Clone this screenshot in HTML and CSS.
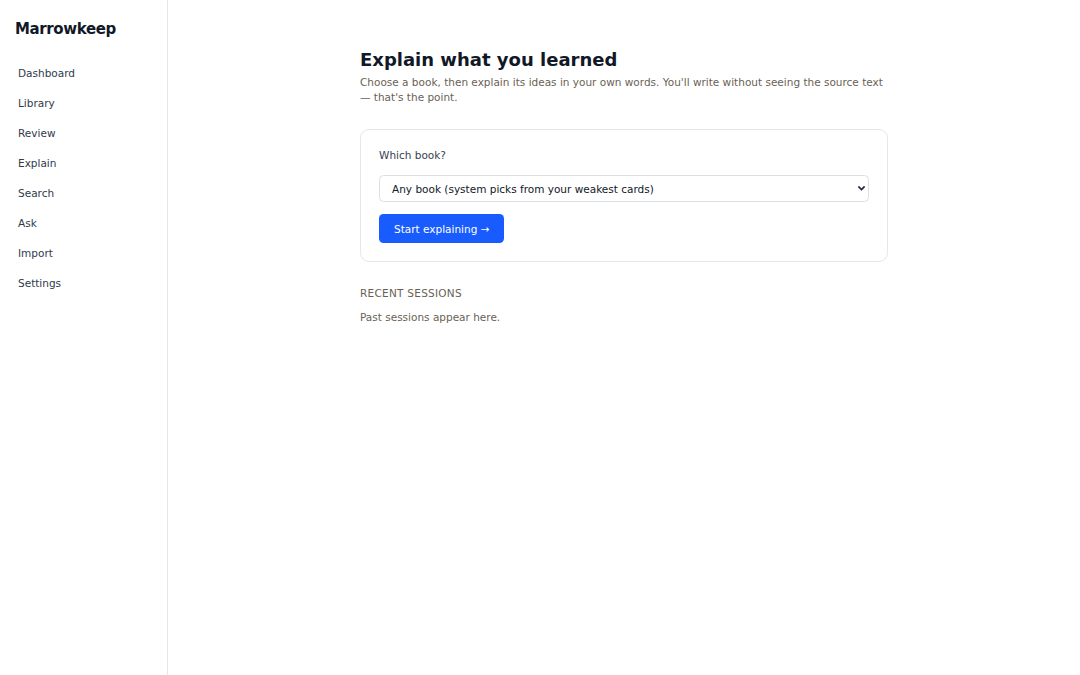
FILE: index.html
```html
<!DOCTYPE html>
<html lang="en">
<head>
<meta charset="utf-8">
<title>Explain — Marrowkeep</title>
<link rel="stylesheet" href="styles.css">
</head>
<body>
<div class="app">
  <aside class="sidebar">
    <div class="logo">Marrowkeep</div>
    <nav class="nav">
      <a class="nav-item" href="#">Dashboard</a>
      <a class="nav-item" href="#">Library</a>
      <a class="nav-item" href="#">Review</a>
      <a class="nav-item" href="#">Explain</a>
      <a class="nav-item" href="#">Search</a>
      <a class="nav-item" href="#">Ask</a>
      <a class="nav-item" href="#">Import</a>
      <a class="nav-item" href="#">Settings</a>
    </nav>
  </aside>
  <main class="main">
    <div class="column">
      <h1 class="title">Explain what you learned</h1>
      <p class="subtitle">Choose a book, then explain its ideas in your own words. You'll write without seeing the source text — that's the point.</p>
      <section class="card">
        <label class="label" for="book">Which book?</label>
        <div class="select-wrap">
          <select class="select" id="book">
            <option>Any book (system picks from your weakest cards)</option>
          </select>
          <svg class="chevron" width="7" height="5" viewBox="0 0 7 5" aria-hidden="true">
            <path d="M1 1 L3.5 3.5 L6 1" fill="none" stroke="#1f2937" stroke-width="1.7" stroke-linecap="square" stroke-linejoin="miter"/>
          </svg>
        </div>
        <button class="btn" type="button">Start explaining →</button>
      </section>
      <h2 class="section-title">Recent sessions</h2>
      <p class="muted">Past sessions appear here.</p>
    </div>
  </main>
</div>
</body>
</html>
```
FILE: styles.css
```css
* { box-sizing: border-box; }
html, body { margin: 0; padding: 0; height: 100%; }
body {
  font-family: "DejaVu Sans", "Noto Sans", sans-serif;
  font-size: 10.5px;
  line-height: 15px;
  color: #111827;
  background: #ffffff;
}
.app {
  display: flex;
  min-height: 100%;
}
.sidebar {
  width: 168px;
  flex: 0 0 168px;
  border-right: 1px solid #e5e7eb;
  padding: 19px 12px;
  background: #ffffff;
}
.logo {
  font-size: 15px;
  line-height: 21px;
  font-weight: 700;
  letter-spacing: -0.375px;
  color: #111827;
  padding: 0 3px;
  margin-bottom: 18.5px;
}
.nav {
  display: flex;
  flex-direction: column;
}
.nav-item {
  display: block;
  padding: 7.5px 6px;
  color: #2f3a4c;
  text-decoration: none;
  border-radius: 4.5px;
}
.main {
  flex: 1;
  padding: 48px 24px;
  display: flex;
  justify-content: center;
}
.column {
  width: 528px;
}
.title {
  margin: 0;
  font-size: 18px;
  line-height: 24px;
  font-weight: 700;
  color: #111827;
}
.subtitle {
  margin: 3px 0 0;
  color: #6b5f55;
}
.card {
  margin-top: 24px;
  border: 1px solid #e5e7eb;
  border-radius: 9px;
  padding: 18px;
  display: flex;
  flex-direction: column;
  align-items: flex-start;
}
.label {
  color: #374151;
  margin-bottom: 12px;
}
.select-wrap {
  position: relative;
  width: 100%;
  margin-bottom: 12px;
}
.select {
  display: block;
  width: 100%;
  height: 27px;
  border: 1px solid #dcdfe4;
  border-radius: 4.5px;
  background-color: #ffffff;
  padding: 0 20px 0 12px;
  font-family: inherit;
  font-size: 10.5px;
  color: #111827;
  -webkit-appearance: none;
  appearance: none;
}
.chevron {
  position: absolute;
  right: 4px;
  top: 11px;
  pointer-events: none;
}
.btn {
  height: 29px;
  padding: 0 15px;
  border: none;
  border-radius: 4.5px;
  background: #185cff;
  color: #ffffff;
  font-family: inherit;
  font-size: 10.5px;
  cursor: pointer;
}
.section-title {
  margin: 24px 0 0;
  font-size: 10.5px;
  line-height: 15px;
  font-weight: 400;
  text-transform: uppercase;
  letter-spacing: 0.26px;
  color: #6b5f55;
}
.muted {
  margin: 9px 0 0;
  color: #6b5f55;
}
```
